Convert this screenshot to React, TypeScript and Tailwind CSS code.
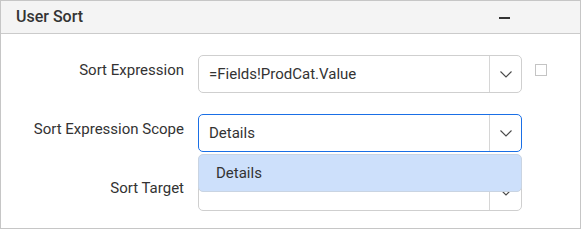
const FONT = "font-['Roboto',_'Liberation_Sans',_sans-serif]";

function Chevron() {
  return (
    <svg width="12" height="7" viewBox="0 0 12 7" fill="none">
      <path d="M0.5 0.5 L6 6 L11.5 0.5" stroke="#4a4a4a" strokeWidth="1.1" />
    </svg>
  );
}

function Select({ value, focused }: { value?: string; focused?: boolean }) {
  return (
    <div
      className={`flex h-[38px] w-[324px] items-stretch rounded-[5px] border bg-white ${
        focused ? "border-[#1a6fe6]" : "border-[#cfcfcf]"
      }`}
    >
      <div className="flex flex-1 items-center pl-[10px] text-[15px] text-[#333]">{value}</div>
      <div className="flex w-[32px] items-center justify-center border-l border-[#d6d6d6]">
        <Chevron />
      </div>
    </div>
  );
}

export default function App() {
  return (
    <div className={`h-[229px] w-[581px] border border-[#c6c6c6] bg-white ${FONT}`}>
      <div className="flex h-[33px] items-center justify-between border-b border-[#cbcbcb] bg-[#f4f4f4] pl-[15px] pr-[70px]">
        <span className="text-[16px] font-medium text-[#333]">User Sort</span>
        <span className="mt-[1px] h-[2px] w-[11px] bg-[#333]" />
      </div>

      <div className="flex flex-col gap-[21px] pt-[21px]">
        <div className="flex items-center">
          <div className="w-[183px] text-right text-[15px] text-[#333] -translate-y-[4px]">Sort Expression</div>
          <div className="ml-[14px]">
            <Select value="=Fields!ProdCat.Value" />
          </div>
          <div className="ml-[13px] h-[12px] w-[12px] -translate-y-[4px] border border-[#c4c4c4] bg-white" />
        </div>

        <div className="relative z-10 flex items-center">
          <div className="w-[183px] text-right text-[15px] text-[#333] -translate-y-[4px]">Sort Expression Scope</div>
          <div className="relative ml-[14px]">
            <Select value="Details" focused />
            <div className="absolute left-0 top-[40px] flex h-[38px] w-[324px] items-center rounded-[5px] border border-[#c9d4e2] bg-[#cde0fb] pl-[17px] text-[15px] text-[#333]">
              Details
            </div>
          </div>
        </div>

        <div className="flex items-center">
          <div className="w-[183px] text-right text-[15px] text-[#333] -translate-y-[4px]">Sort Target</div>
          <div className="ml-[14px]">
            <Select />
          </div>
        </div>
      </div>
    </div>
  );
}
